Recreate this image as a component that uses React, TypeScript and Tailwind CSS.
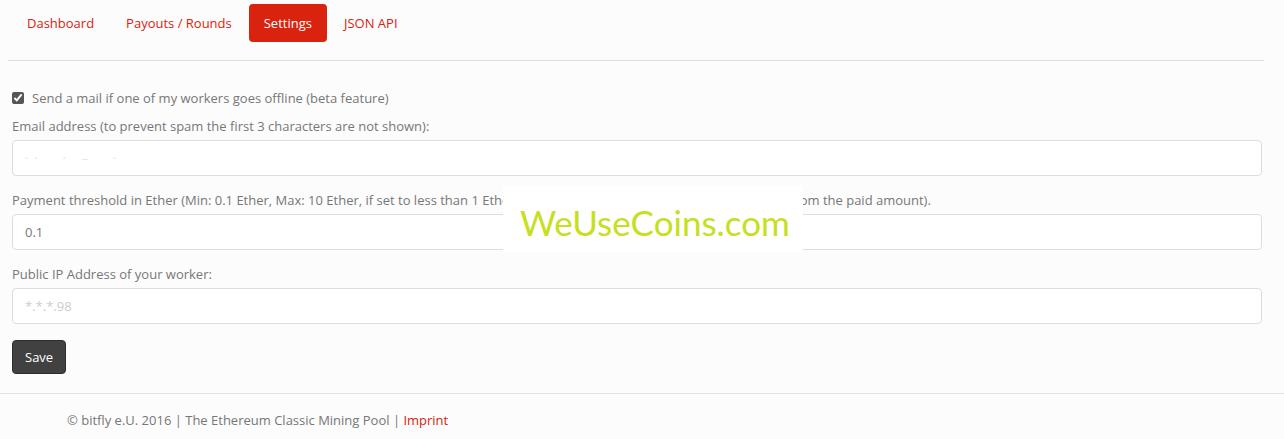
import React from "react";

export default function App() {
  const font = { fontFamily: '"Open Sans", "Liberation Sans", sans-serif' };
  return (
    <div className="relative min-h-[439px] w-[1284px] bg-[#fcfcfc] text-[13px] leading-[18px] text-[#777777]" style={font}>
      <div className="pl-[12px] pr-[22px]">
        <nav className="flex gap-[2px] pt-[4px]">
          <a className="rounded-[4px] px-[15px] py-[10px] text-[#d9230f]">Dashboard</a>
          <a className="rounded-[4px] px-[15px] py-[10px] text-[#d9230f]">Payouts / Rounds</a>
          <a className="rounded-[4px] bg-[#d9230f] px-[15px] py-[10px] text-white">Settings</a>
          <a className="rounded-[4px] px-[15px] py-[10px] text-[#d9230f]">JSON API</a>
        </nav>
        <div className="ml-[-4px] mr-[-2px] mt-[18px] border-t border-[#dddddd]" />
        <div className="mt-[28px] flex items-center gap-[8px]">
          <input type="checkbox" defaultChecked className="m-0 h-[12px] w-[12px] accent-[#555]" />
          <span>Send a mail if one of my workers goes offline (beta feature)</span>
        </div>
        <div className="mt-[10px]">
          <label className="block">Email address (to prevent spam the first 3 characters are not shown):</label>
          <div className="mt-[5px] flex h-[36px] items-center rounded-[4px] border border-[#dddddd] bg-white px-[12px] text-[#e4e4e4]">
            <span className="tracking-[6px]">··&nbsp;&nbsp;·&nbsp;–&nbsp;&nbsp;·</span>
          </div>
        </div>
        <div className="mt-[15px]">
          <label className="block whitespace-nowrap">
            Payment threshold in Ether (Min: 0.1 Ether, Max: 10 Ether, if set to less than 1 Ether
            <span className="inline-block w-[285px] overflow-hidden whitespace-nowrap align-bottom">
              &nbsp;a fee of 0.01 Ether will be deducted fr
            </span>
            om the paid amount).
          </label>
          <div className="mt-[5px] flex h-[36px] items-center rounded-[4px] border border-[#dddddd] bg-white px-[12px] text-[#777777]">
            0.1
          </div>
        </div>
        <div className="mt-[15px]">
          <label className="block">Public IP Address of your worker:</label>
          <div className="mt-[5px] flex h-[36px] items-center rounded-[4px] border border-[#dddddd] bg-white px-[12px] text-[#cccccc]">
            *.*.*.98
          </div>
        </div>
        <button className="mt-[16px] h-[34px] rounded-[4px] border border-[#2e2e2e] bg-[#414141] px-[12px] text-white">
          Save
        </button>
      </div>
      <div className="mt-[19px] border-t border-[#e3e3e3]" />
      <div className="pl-[67px] pt-[17px]">
        © bitfly e.U. 2016 | The Ethereum Classic Mining Pool | <span className="text-[#d9230f]">Imprint</span>
      </div>
      <div className="absolute left-[503px] top-[186px] flex h-[66px] w-[300px] items-center justify-center bg-white pl-[4px] pt-[6px]">
        <span className="text-[35px] leading-[40px] text-[#c6e01d]" style={{ fontFamily: 'Lato, sans-serif' }}>
          WeUseCoins.com
        </span>
      </div>
    </div>
  );
}
